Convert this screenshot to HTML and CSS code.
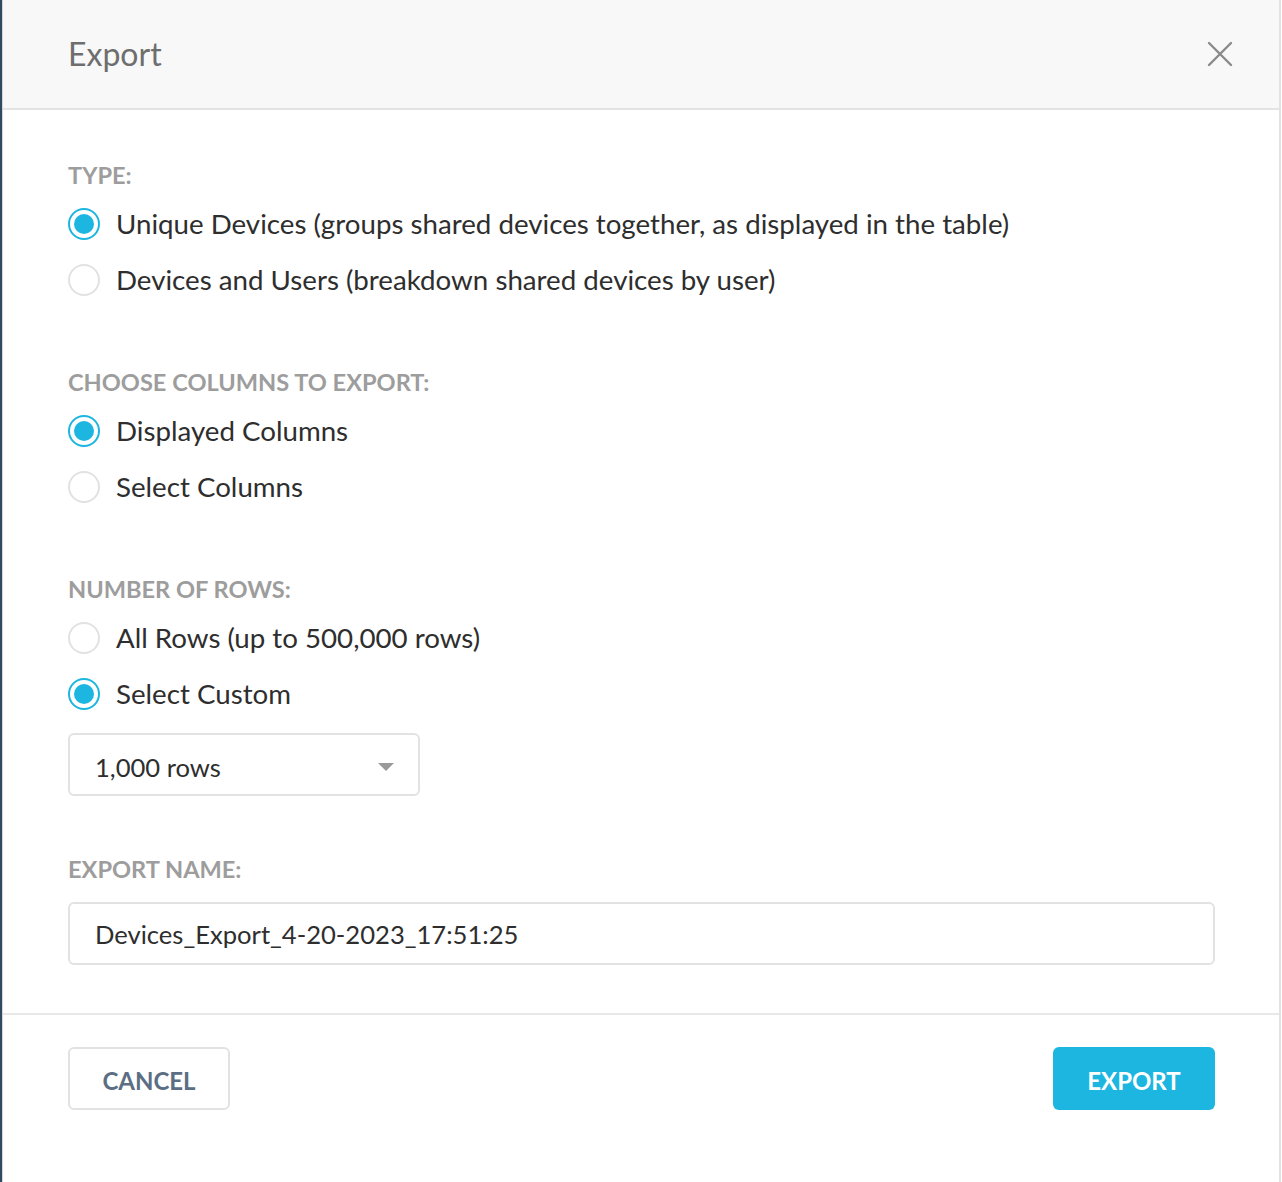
FILE: index.html
```html
<!DOCTYPE html>
<html>
<head>
<meta charset="utf-8">
<link rel="stylesheet" href="styles.css">
</head>
<body>
<div class="page">
  <div class="backdrop-edge"></div>
  <div class="modal">
    <header class="modal-header">
      <h1 class="modal-title">Export</h1>
      <button class="close-btn" aria-label="Close">
        <svg width="26" height="26" viewBox="0 0 26 26"><path d="M2 2 L24 24 M24 2 L2 24" stroke="#8a8a8a" stroke-width="2.4" fill="none" stroke-linecap="round"/></svg>
      </button>
    </header>
    <main class="modal-body">
      <section class="group">
        <div class="label">TYPE:</div>
        <label class="radio-row"><span class="radio checked"></span><span class="radio-text">Unique Devices (groups shared devices together, as displayed in the table)</span></label>
        <label class="radio-row"><span class="radio"></span><span class="radio-text">Devices and Users (breakdown shared devices by user)</span></label>
      </section>
      <section class="group">
        <div class="label">CHOOSE COLUMNS TO EXPORT:</div>
        <label class="radio-row"><span class="radio checked"></span><span class="radio-text">Displayed Columns</span></label>
        <label class="radio-row"><span class="radio"></span><span class="radio-text">Select Columns</span></label>
      </section>
      <section class="group">
        <div class="label">NUMBER OF ROWS:</div>
        <label class="radio-row"><span class="radio"></span><span class="radio-text">All Rows (up to 500,000 rows)</span></label>
        <label class="radio-row"><span class="radio checked"></span><span class="radio-text">Select Custom</span></label>
        <div class="select">
          <span class="select-value">1,000 rows</span>
          <span class="caret"></span>
        </div>
      </section>
      <section class="group name-group">
        <div class="label">EXPORT NAME:</div>
        <div class="text-input">Devices_Export_4-20-2023_17:51:25</div>
      </section>
    </main>
    <footer class="modal-footer">
      <button class="btn btn-cancel">CANCEL</button>
      <button class="btn btn-export">EXPORT</button>
    </footer>
  </div>
  <div class="right-edge"></div>
</div>
</body>
</html>
```

FILE: styles.css
```css
* { box-sizing: border-box; }
html, body { margin: 0; padding: 0; background: #fff; }
body { font-family: Lato, "Open Sans", sans-serif; color: #2e2e2e; }

.page { display: flex; height: 1182px; width: 1282px; }
.backdrop-edge { width: 2px; background: #2f4a63; flex: none; }
.right-edge { width: 1px; background: #fff; flex: none; }

.modal {
  flex: 1;
  display: flex;
  flex-direction: column;
  border-left: 1px solid #d6d6d6;
  border-right: 2px solid #e2e2e2;
  background: #fff;
}

.modal-header {
  height: 110px;
  background: #f8f8f8;
  border-bottom: 2px solid #e3e3e3;
  display: flex;
  align-items: center;
  justify-content: space-between;
  padding: 0 46px 0 65px;
}
.modal-title {
  margin: 0;
  font-size: 32px;
  font-weight: 400;
  color: #6e6e6e;
  line-height: 40px;
}
.close-btn {
  background: none; border: 0; padding: 0; width: 26px; height: 26px;
  display: flex; align-items: center; justify-content: center;
}

.modal-body {
  padding: 51px 64px 0 65px;
  display: flex;
  flex-direction: column;
}
.group { display: flex; flex-direction: column; }
.group + .group { margin-top: 60px; }

.label {
  font-size: 23.6px;
  line-height: 28px;
  font-weight: 700;
  color: #9d9d9d;
  margin-bottom: 7px;
}

.radio-row {
  display: flex;
  align-items: center;
  height: 56px;
}
.radio {
  width: 32px; height: 32px;
  border-radius: 50%;
  border: 2px solid #e2e2e2;
  margin-right: 16px;
  flex: none;
  display: flex; align-items: center; justify-content: center;
}
.radio.checked { border-color: #1cb6e0; }
.radio.checked::after {
  content: "";
  width: 20px; height: 20px; border-radius: 50%;
  background: #1cb6e0;
}
.radio-text { font-size: 27.7px; line-height: 34px; color: #2e2e2e; }

.select {
  margin-top: 11px;
  width: 352px;
  height: 63px;
  flex: none;
  border: 2px solid #e2e2e2;
  border-radius: 6px;
  display: flex;
  align-items: center;
  justify-content: space-between;
  padding: 4px 24px 0 25px;
}
.select-value, .text-input { font-size: 25.6px; color: #2e2e2e; }
.caret {
  width: 0; height: 0;
  border-left: 8px solid transparent;
  border-right: 8px solid transparent;
  border-top: 8px solid #999;
}

.group.name-group { margin-top: 59px; }
.name-group .label { margin-bottom: 19px; }
.text-input {
  height: 63px;
  flex: none;
  border: 2px solid #e2e2e2;
  border-radius: 6px;
  display: flex;
  align-items: center;
  padding: 0 25px;
}

.modal-footer {
  margin-top: 48px;
  border-top: 2px solid #e8e8e8;
  padding: 32px 64px 0 65px;
  display: flex;
  justify-content: space-between;
}
.btn {
  height: 63px;
  width: 162px;
  border-radius: 6px;
  padding: 3px 0 0;
  font-family: Lato, "Open Sans", sans-serif;
  font-size: 24px;
  font-weight: 700;
  letter-spacing: 0;
}
.btn-cancel {
  background: #fff;
  border: 2px solid #e2e2e2;
  color: #5b6e84;
}
.btn-export {
  background: #1cb6e0;
  border: 0;
  color: #fff;
}
```
